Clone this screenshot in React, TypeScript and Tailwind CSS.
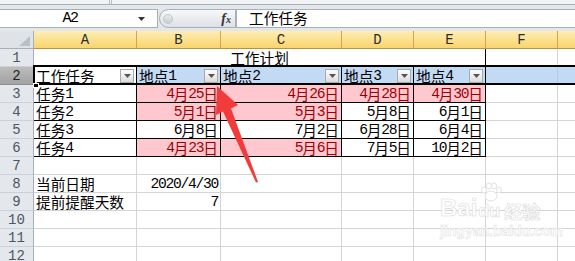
import React from 'react';

function Txt({ s }: { s: string }) {
  const parts = s.split(/([\x00-\x7f]+)/).filter(Boolean);
  return (
    <>
      {parts.map((p, i) =>
        /^[\x00-\x7f]+$/.test(p) ? (
          <span key={i} className="font-['Liberation_Mono',monospace] tracking-[-1.3px]">
            {p}
          </span>
        ) : (
          <span key={i} className="font-['Noto_Sans_CJK_SC',sans-serif]">
            {p}
          </span>
        )
      )}
    </>
  );
}

function DD() {
  return (
    <div className="ml-auto mb-[1px] self-end w-[14px] h-[14px] shrink-0 border border-[#a9a9a9] bg-linear-to-b from-[#fdfdfd] to-[#dcdcdc] flex items-center justify-center">
      <svg width="7" height="4" viewBox="0 0 7 4">
        <path d="M0 0 H7 L3.5 4 Z" fill="#555" />
      </svg>
    </div>
  );
}

type Cell = {
  t?: string;
  a?: 'l' | 'r' | 'c';
  pink?: boolean;
  blk?: boolean;
  dd?: boolean;
  blue?: boolean;
  w: string;
};

const W = ['w-[103px]', 'w-[84px]', 'w-[121px]', 'w-[72px]', 'w-[72px]', 'w-[72px]', 'w-[40px]'];

function C({ c }: { c: Cell }) {
  const cls = [
    'h-[18px] shrink-0 flex items-end border-r border-b whitespace-nowrap text-[14.67px] leading-[16px] px-[2px]',
    c.w,
    c.blk ? 'border-black' : c.blue ? 'border-[#b4cbe8]' : 'border-[#d4d4d4]',
    c.pink ? 'bg-[#ffc7ce] text-[#9c0006]' : c.blue ? 'bg-[#c3daf5] text-black' : 'bg-white text-black',
    c.a === 'r' ? 'justify-end' : c.a === 'c' ? 'justify-center' : 'justify-start',
  ].join(' ');
  return (
    <div className={cls}>
      {c.t && <Txt s={c.t} />}
      {c.dd && <DD />}
    </div>
  );
}

function RowHead({ n, sel }: { n: number; sel?: boolean }) {
  return (
    <div
      className={
        'w-[34px] h-[18px] shrink-0 flex items-center justify-center border-r border-b font-["Liberation_Mono",monospace] text-[14px] leading-none ' +
        (sel
          ? 'bg-linear-to-b from-[#bdbdbd] to-[#a2a2a2] border-r-[#8c8c8c] border-b-[#8f8f8f] text-[#1f1f1f]'
          : 'bg-[#e4e8ed] border-r-[#a5aebb] border-b-[#cbd1d9] text-[#4d5560]')
      }
    >
      {n}
    </div>
  );
}

function Row({ n, cells, sel }: { n: number; cells: Cell[]; sel?: boolean }) {
  return (
    <div className="flex h-[18px]">
      <RowHead n={n} sel={sel} />
      {cells.map((c, i) => (
        <C key={i} c={c} />
      ))}
    </div>
  );
}

const e = (i: number, extra: Partial<Cell> = {}): Cell => ({ w: W[i], ...extra });

const dateRows: { n: number; task: string; d: [string, boolean][] }[] = [
  { n: 3, task: '任务1', d: [['4月25日', true], ['4月26日', true], ['4月28日', true], ['4月30日', true]] },
  { n: 4, task: '任务2', d: [['5月1日', true], ['5月3日', true], ['5月8日', false], ['6月1日', false]] },
  { n: 5, task: '任务3', d: [['6月8日', false], ['7月2日', false], ['6月28日', false], ['6月4日', false]] },
  { n: 6, task: '任务4', d: [['4月23日', true], ['5月6日', true], ['7月5日', false], ['10月2日', false]] },
];

export default function App() {
  return (
    <div className="relative w-[575px] h-[261px] overflow-hidden bg-white font-['Noto_Sans_CJK_SC',sans-serif]">
      {/* top chrome */}
      <div className="flex h-[4px] bg-[#f1f2f4]">
        <div className="w-[110px] h-full border-r border-[#b8bec6]" />
        <div className="w-[2px] h-full border-r border-[#b8bec6]" />
      </div>
      <div className="h-[1px] bg-[#a7afb9]" />
      <div className="h-[4px] bg-[#e3e7ec]" />
      {/* formula bar */}
      <div className="flex h-[19px] bg-[#e3e7ec]">
        <div className="w-[158px] h-full bg-white border-y border-r border-[#a7afb9] flex items-center">
          <div className="w-[140px] text-center font-['Liberation_Mono',monospace] text-[15px] leading-none text-black tracking-[-1.5px]">
            A2
          </div>
          <svg width="7" height="4" viewBox="0 0 7 4" className="ml-[-2px]">
            <path d="M0 0 H7 L3.5 4 Z" fill="#333" />
          </svg>
        </div>
        <div className="w-[78px] h-full flex items-center pl-[1px]">
          <div className="w-full h-[19px] rounded-l-full border border-[#a7afb9] bg-linear-to-b from-[#f7f8f9] to-[#dde1e6] flex items-center">
            <div className="ml-[3px] w-[10px] h-[10px] rounded-full bg-linear-to-b from-[#e9ebee] to-[#c9ced4] border border-[#c2c7cd]" />
            <div className="ml-auto mr-[4px] font-['Liberation_Serif',serif] italic font-bold text-[14px] leading-none text-[#333]">
              f<span className="text-[10px]">x</span>
            </div>
          </div>
        </div>
        <div className="flex-1 h-full bg-white border-y border-l border-[#a7afb9] flex items-center pl-[12px] text-[14.67px] leading-none text-black">
          工作任务
        </div>
      </div>
      <div className="h-[3px] bg-[#e3e7ec]" />
      {/* column header */}
      <div className="flex h-[18px]">
        <div className="w-[34px] h-[18px] shrink-0 bg-[#dfe3e8] border-r border-b border-[#a5aebb] relative">
          <svg width="34" height="18" viewBox="0 0 34 18" className="absolute inset-0">
            <path d="M19 15 H30 V5 Z" fill="#b9c0c9" />
          </svg>
        </div>
        {['A', 'B', 'C', 'D', 'E', 'F', ''].map((l, i) => (
          <div
            key={i}
            className={
              W[i] +
              ' h-[18px] shrink-0 flex items-center justify-center border-r border-b border-r-[#d3a54c] border-b-[#c09040] bg-linear-to-b from-[#fdeeb3] to-[#f9d46c] font-["Liberation_Mono",monospace] text-[14px] leading-none text-[#2c2c2c]'
            }
          >
            {l}
          </div>
        ))}
      </div>
      {/* row 1 */}
      <div className="flex h-[18px]">
        <RowHead n={1} />
        <div className="w-[452px] h-[18px] shrink-0 flex items-end justify-center border-r border-b border-black bg-white text-[14.67px] leading-[16px]">
          <Txt s="工作计划" />
        </div>
        <C c={e(5)} />
        <C c={e(6)} />
      </div>
      {/* row 2 */}
      <div className="relative">
        <Row
          n={2}
          sel
          cells={[
            e(0, { t: '工作任务', blk: true, dd: true }),
            e(1, { t: '地点1', blk: true, dd: true, blue: true }),
            e(2, { t: '地点2', blk: true, dd: true, blue: true }),
            e(3, { t: '地点3', blk: true, dd: true, blue: true }),
            e(4, { t: '地点4', blk: true, dd: true, blue: true }),
            e(5, { blue: true }),
            e(6, { blue: true }),
          ]}
        />
        <div className="absolute left-[33px] right-0 top-[-2px] h-[20px] border-y-2 border-l-2 border-black pointer-events-none" />
        <div className="absolute left-[33px] top-[16px] w-[6px] h-[5px] bg-black border border-white pointer-events-none" />
      </div>
      {/* rows 3-6 */}
      {dateRows.map((r) => (
        <Row
          key={r.n}
          n={r.n}
          cells={[
            e(0, { t: r.task, blk: true }),
            ...r.d.map(([t, p], i) => e(i + 1, { t, pink: p, a: 'r', blk: true })),
            e(5),
            e(6),
          ]}
        />
      ))}
      <Row n={7} cells={[e(0), e(1), e(2), e(3), e(4), e(5), e(6)]} />
      <Row n={8} cells={[e(0, { t: '当前日期' }), e(1, { t: '2020/4/30', a: 'r' }), e(2), e(3), e(4), e(5), e(6)]} />
      <Row n={9} cells={[e(0, { t: '提前提醒天数' }), e(1, { t: '7', a: 'r' }), e(2), e(3), e(4), e(5), e(6)]} />
      <Row n={10} cells={[e(0), e(1), e(2), e(3), e(4), e(5), e(6)]} />
      <Row n={11} cells={[e(0), e(1), e(2), e(3), e(4), e(5), e(6)]} />
      <Row n={12} cells={[e(0), e(1), e(2), e(3), e(4), e(5), e(6)]} />

      {/* annotation arrow */}
      <svg className="absolute inset-0 pointer-events-none" width="575" height="261" viewBox="0 0 575 261">
        <polygon
          points="217,86 238,105 231,108.5 258,182 256,182.5 223,111.5 216,115"
          fill="#f23b3b"
        />
      </svg>

      {/* watermark */}
      <div className="absolute left-[440px] top-[196px] pointer-events-none flex flex-col items-start">
        <div className="flex items-end">
          <span className="font-['Liberation_Sans',sans-serif] font-bold text-[24px] leading-none text-white [-webkit-text-stroke:0.6px_#dadada]">
            Bai
          </span>
          <span className="relative ml-[1px] font-['Liberation_Sans',sans-serif] font-bold text-[18px] leading-none text-white [-webkit-text-stroke:0.6px_#dadada]">
            du
            <svg className="absolute left-[2px] top-[-20px]" width="22" height="20" viewBox="0 0 22 20">
              <g fill="white" stroke="#dadada" strokeWidth="0.8">
                <ellipse cx="11" cy="14" rx="6" ry="5" />
                <ellipse cx="4" cy="8" rx="2.5" ry="3" />
                <ellipse cx="9" cy="4" rx="2.5" ry="3" />
                <ellipse cx="14" cy="4" rx="2.5" ry="3" />
                <ellipse cx="19" cy="8" rx="2.5" ry="3" />
              </g>
            </svg>
          </span>
          <span className="ml-[4px] font-['Noto_Sans_CJK_SC',sans-serif] font-bold text-[18px] leading-none text-white [-webkit-text-stroke:0.6px_#dadada]">
            经验
          </span>
        </div>
        <div className="mt-[4px] font-['Liberation_Sans',sans-serif] font-bold text-[14px] leading-none text-white [-webkit-text-stroke:0.5px_#dcdcdc]">
          jingyan.baidu.com
        </div>
      </div>
    </div>
  );
}
